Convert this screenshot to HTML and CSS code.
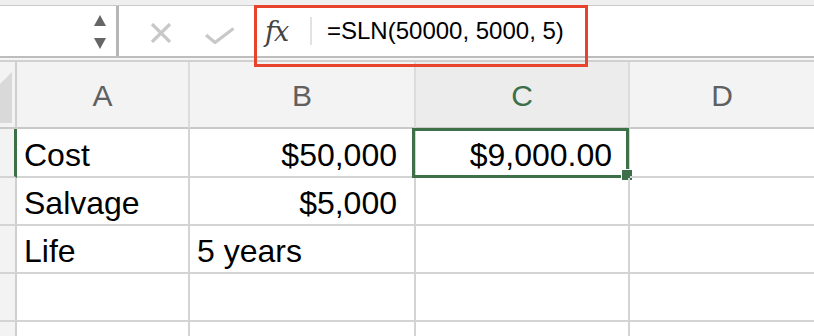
FILE: index.html
```html
<!DOCTYPE html>
<html lang="en">
<head>
    <meta charset="UTF-8">
    <title>SLN - Sheet</title>
    <link rel="stylesheet" href="styles.css">
</head>
<body>
    <div class="toolbar">
        <div class="namebox">
            <svg class="spinner" width="12" height="34" viewBox="0 0 12 34">
                <polygon points="0,11 6,0 12,11" />
                <polygon points="0,23 12,23 6,34" />
            </svg>
        </div>
        <div class="formula-bar">
            <svg class="cancel" width="22" height="20" viewBox="0 0 22 20">
                <path d="M2 1 L20 19 M20 1 L2 19" />
            </svg>
            <svg class="enter" width="30" height="17" viewBox="0 0 30 17">
                <path d="M1 8 L10 15.5 L28.5 1.5" />
            </svg>
            <span class="fx">fx</span>
            <span class="divider"></span>
            <span class="formula">=SLN(50000, 5000, 5)</span>
        </div>
    </div>
    <div class="toolbar-gap"></div>

    <!-- callout drawn over the formula bar -->
    <div class="callout"></div>

    <div class="sheet">
        <div class="corner">
            <svg width="15" height="65" viewBox="0 0 15 65">
                <polygon points="12,10 12,61 0,61 0,22" />
            </svg>
        </div>
        <div class="col-head">A</div>
        <div class="col-head">B</div>
        <div class="col-head active">C</div>
        <div class="col-head last">D</div>

        <div class="row-head active"></div>
        <div class="cell">Cost</div>
        <div class="cell num">$50,000</div>
        <div class="cell num selected">$9,000.00
            <div class="selection"><span class="handle"></span></div>
        </div>
        <div class="cell last"></div>

        <div class="row-head"></div>
        <div class="cell">Salvage</div>
        <div class="cell num">$5,000</div>
        <div class="cell"></div>
        <div class="cell last"></div>

        <div class="row-head"></div>
        <div class="cell">Life</div>
        <div class="cell">5 years</div>
        <div class="cell"></div>
        <div class="cell last"></div>

        <div class="row-head"></div>
        <div class="cell"></div>
        <div class="cell"></div>
        <div class="cell"></div>
        <div class="cell last"></div>

        <div class="row-head bottom"></div>
        <div class="cell bottom"></div>
        <div class="cell bottom"></div>
        <div class="cell bottom"></div>
        <div class="cell bottom last"></div>
    </div>
</body>
</html>
```

FILE: styles.css
```css
:root {
    --grid-line: #d4d4d4;
    --head-bg: #f3f3f3;
    --excel-green: #3d7048;
    --callout-red: #e8432c;
    --icon-gray: #c8c8c8;
}

* {
    margin: 0;
    padding: 0;
    box-sizing: border-box;
}

body {
    font-family: 'Liberation Sans', Arial, sans-serif;
    background-color: #efefef;
    color: #000;
    width: 814px;
    height: 336px;
    overflow: hidden;
}

/* formula bar */

.toolbar {
    margin-top: 5px;
    height: 53px;
    display: flex;
    background-color: #fff;
    border-top: 1px solid #c9c9c9;
    border-bottom: 2px solid #bdbdbd;
}

.namebox {
    width: 119px;
    display: flex;
    justify-content: flex-end;
    align-items: center;
    padding-right: 10px;
    border-right: 3px solid #b6b6b6;
}

.spinner {
    margin-top: 1px;
    fill: #666;
}

.formula-bar {
    flex: 1;
    display: flex;
    align-items: center;
}

.cancel {
    margin-left: 31px;
    margin-top: 3px;
}

.enter {
    margin-left: 33px;
    margin-top: 9px;
}

.cancel path,
.enter path {
    fill: none;
    stroke: var(--icon-gray);
    stroke-width: 3.2;
}

.fx {
    margin-left: 30px;
    width: 35px;
    font-family: 'DejaVu Serif', 'Liberation Serif', serif;
    font-style: italic;
    font-size: 27px;
    letter-spacing: -1px;
    color: #444;
}

.divider {
    margin-left: 10px;
    width: 2px;
    height: 28px;
    background-color: #e2e2e2;
}

.formula {
    margin-left: 15px;
    font-size: 24px;
    color: #000;
}

.toolbar-gap {
    height: 4px;
    background-color: #f6f6f6;
    border-bottom: 2px solid #d0d0d0;
}

.callout {
    position: absolute;
    top: 5px;
    left: 254px;
    width: 334px;
    height: 62px;
    border: 3px solid var(--callout-red);
}

/* grid */

.sheet {
    display: grid;
    grid-template-columns: 17px 173px 226px 214px 1fr;
    grid-template-rows: 67px 49px 48px 48px 48px 14px;
    background-color: #fff;
}

.corner,
.col-head {
    background-color: var(--head-bg);
    border-right: 2px solid #dcdcdc;
    border-bottom: 2px solid #c9c9c9;
}

.corner {
    border-right-color: #cfcfcf;
}

.corner polygon {
    fill: #d9d9d9;
}

.col-head {
    display: flex;
    justify-content: center;
    align-items: center;
    padding-top: 2px;
    font-size: 30px;
    color: #606060;
}

.col-head.active {
    background-color: #ececec;
    color: var(--excel-green);
}

.col-head.last,
.cell.last {
    border-right: none;
}

.row-head {
    background-color: var(--head-bg);
    border-right: 2px solid #cfcfcf;
    border-bottom: 2px solid var(--grid-line);
}

.row-head.active {
    border-right: 3px solid var(--excel-green);
}

.cell {
    position: relative;
    display: flex;
    align-items: flex-end;
    padding: 0 17px 2px 7px;
    font-size: 32px;
    white-space: nowrap;
    border-right: 2px solid var(--grid-line);
    border-bottom: 2px solid var(--grid-line);
}

.row-head.bottom,
.cell.bottom {
    border-bottom: none;
}

.cell.num {
    justify-content: flex-end;
}

.cell.selected {
    padding-right: 16px;
}

.selection {
    position: absolute;
    top: -1px;
    left: -4px;
    right: -1px;
    bottom: -2px;
    border: 3px solid var(--excel-green);
}

.handle {
    position: absolute;
    right: -7px;
    bottom: -6px;
    width: 12px;
    height: 12px;
    background-color: var(--excel-green);
    border: 1px solid #fff;
}
```
